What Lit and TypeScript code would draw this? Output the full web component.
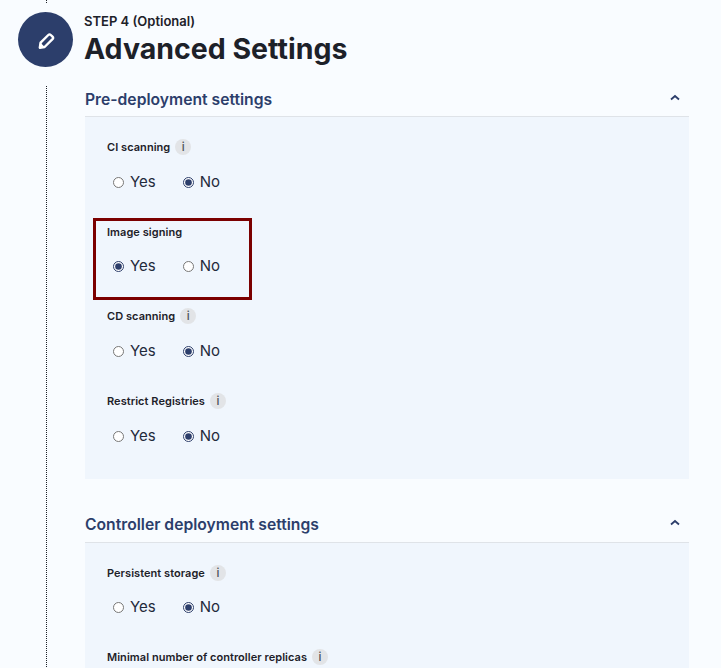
import { LitElement, html, css } from "lit";
import { customElement } from "lit/decorators.js";

interface Field {
  label: string;
  value?: "yes" | "no";
  info?: boolean;
  highlight?: boolean;
}

const PRE: Field[] = [
  { label: "CI scanning", value: "no", info: true },
  { label: "Image signing", value: "yes", highlight: true },
  { label: "CD scanning", value: "no", info: true },
  { label: "Restrict Registries", value: "no", info: true },
];

const CONTROLLER: Field[] = [
  { label: "Persistent storage", value: "no", info: true },
  { label: "Minimal number of controller replicas", info: true },
];

@customElement("app-root")
export class AppRoot extends LitElement {
  static styles = css`
    :host {
      display: block;
      height: 668px;
      overflow: hidden;
      background: #f9fcff;
      font-family: Inter, "Liberation Sans", sans-serif;
      color: #1d2129;
    }

    .tick {
      width: 0;
      height: 3px;
      margin-left: 46px;
      border-left: 1px dotted #1d2129;
    }

    .header {
      display: flex;
      align-items: flex-start;
      gap: 11px;
      margin: 9px 0 0 18px;
    }

    .badge {
      width: 55px;
      height: 55px;
      border-radius: 50%;
      background: #2c3e6b;
      display: flex;
      align-items: center;
      justify-content: center;
    }

    .step {
      font-size: 13px;
      font-weight: 600;
      line-height: 16px;
      margin-top: 1px;
    }

    h1 {
      margin: 3px 0 0;
      font-size: 28.5px;
      font-weight: 700;
      line-height: 34px;
    }

    .body {
      margin: 19px 0 0 46px;
      padding: 0 32px 0 38px;
      border-left: 1px dotted #1d2129;
    }

    .section-head {
      display: flex;
      align-items: flex-start;
      justify-content: space-between;
      height: 28px;
      padding-top: 2px;
      border-bottom: 1px solid #dfe3e8;
    }

    .section-head.tall {
      height: 29px;
    }

    h2 {
      margin: 0;
      font-size: 15.7px;
      font-weight: 600;
      line-height: 24px;
      color: #2c3e6b;
    }

    .chevron {
      display: block;
      margin: 4px 8px 0 0;
    }

    .panel {
      background: #f0f6fd;
      padding: 22px 22px 0;
      height: 340px;
      margin-bottom: 32px;
    }

    .panel.open {
      height: 200px;
      margin-bottom: 0;
    }

    .field {
      height: 85px;
      box-sizing: border-box;
      position: relative;
    }

    .open .field {
      height: 84px;
    }

    .field.mark {
      height: 84px;
    }

    .mark::before {
      content: "";
      position: absolute;
      left: -14px;
      top: -6px;
      width: 159px;
      height: 82px;
      border: 3px solid #7b0000;
      box-sizing: border-box;
    }

    .label {
      display: flex;
      align-items: center;
      gap: 5px;
      height: 16px;
      font-size: 11px;
      letter-spacing: 0.05px;
      font-weight: 600;
      line-height: 16px;
    }

    .info {
      width: 16px;
      height: 16px;
      border-radius: 50%;
      background: #e2e4e7;
      color: #4a5058;
      font-size: 11.5px;
      font-weight: 500;
      text-align: center;
      line-height: 16px;
    }

    .options {
      display: flex;
      gap: 27px;
      margin: 17px 0 0 6px;
    }

    .mark .options,
    .open .options {
      margin-top: 16px;
    }

    label.option {
      display: flex;
      align-items: center;
      gap: 6px;
      font-size: 15px;
      line-height: 20px;
      color: #1f2a3c;
    }

    input {
      width: 11px;
      height: 11px;
      margin: 0;
      accent-color: #2c3e6b;
    }
  `;

  private renderField(f: Field, group: string) {
    return html`
      <div class="field ${f.highlight ? "mark" : ""}">
        <div class="label">
          <span>${f.label}</span>
          ${f.info ? html`<span class="info">i</span>` : null}
        </div>
        ${f.value
          ? html`<div class="options">
              <label class="option">
                <input type="radio" name=${group} ?checked=${f.value === "yes"} />Yes
              </label>
              <label class="option">
                <input type="radio" name=${group} ?checked=${f.value === "no"} />No
              </label>
            </div>`
          : null}
      </div>
    `;
  }

  private renderHead(title: string, tall = false) {
    return html`
      <div class="section-head ${tall ? "tall" : ""}">
        <h2>${title}</h2>
        <svg class="chevron" width="12" height="12" viewBox="0 0 12 12" fill="none">
          <path d="M2 7.5 6 4l4 3.5" stroke="#2c3e6b" stroke-width="1.8" />
        </svg>
      </div>
    `;
  }

  render() {
    return html`
      <div class="tick"></div>
      <div class="header">
        <div class="badge">
          <svg width="18" height="18" viewBox="0 0 18 18" fill="none">
            <path
              d="M11.3 4a1.8 1.8 0 0 1 2.5 0l1.7 1.7a1.8 1.8 0 0 1 0 2.5L7.6 16 2.8 16.7 3.6 11.7Z"
              stroke="#fff"
              stroke-width="2.4"
              stroke-linejoin="round"
            />
            <path d="M2 17.5 3 11.2 8 16.3Z" fill="#fff" />
          </svg>
        </div>
        <div>
          <div class="step">STEP 4 (Optional)</div>
          <h1>Advanced Settings</h1>
        </div>
      </div>
      <div class="body">
        ${this.renderHead("Pre-deployment settings")}
        <div class="panel">
          ${PRE.map((f, i) => this.renderField(f, `pre-${i}`))}
        </div>
        ${this.renderHead("Controller deployment settings", true)}
        <div class="panel open">
          ${CONTROLLER.map((f, i) => this.renderField(f, `ctl-${i}`))}
        </div>
      </div>
    `;
  }
}
